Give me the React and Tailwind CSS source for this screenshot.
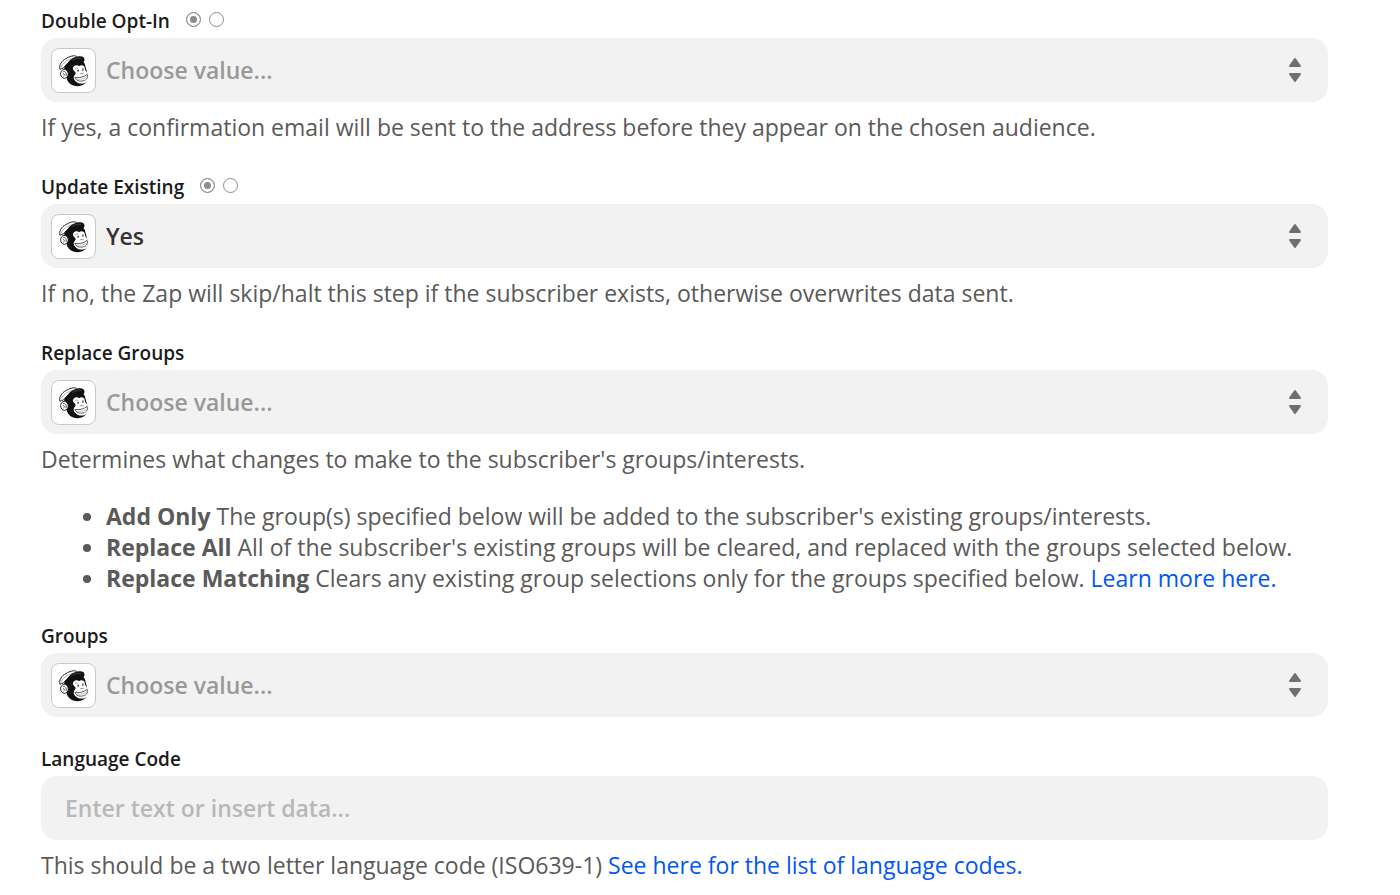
import React, { useState } from "react";

const MailchimpIcon = () => (
  <svg viewBox="64 141 135 135" className="h-full w-full" aria-hidden="true">
    {/* head */}
    <path
      d="M103 192 C112 180 132 174 150 177 C163 178 168 186 169 196 L176 222 C180 238 170 256 145 258 C124 258 113 246 110 232 L102 212 Z"
      fill="#111"
    />
    {/* face */}
    <path
      d="M132 197 C137 191 145 191 149 195 C155 189 167 192 167 201 C167 208 171 211 175 216 C177 220 175 222 177 225 C181 231 178 242 169 247 C157 253 141 248 135 239 C130 232 132 226 136 222 C140 217 138 214 134 210 C129 206 128 201 132 197 Z"
      fill="#fff"
    />
    {/* hat */}
    <path
      d="M89 205 C85 192 94 178 108 171 C118 165 131 160 138 163 C142 164 144 167 143 171 C128 174 111 184 101 200 C97 201 92 203 89 205 Z"
      fill="#fff"
      stroke="#222"
      strokeWidth="3"
      strokeLinejoin="round"
    />
    <path d="M92 199 C96 185 113 173 139 168" fill="none" stroke="#666" strokeWidth="1.5" />
    <path
      d="M112 190 C115 177 132 166 150 164 C160 163 167 168 166 176 C165 181 162 184 157 184 C145 180 130 183 112 190 Z"
      fill="#111"
    />
    <path d="M128 177 C136 171 146 169 155 171" fill="none" stroke="#777" strokeWidth="1.5" />
    {/* ear */}
    <ellipse cx="103" cy="219" rx="12" ry="14" fill="#fff" stroke="#222" strokeWidth="3" />
    <path d="M98 213 C105 208 111 217 108 226 M99 218 C104 218 104 224 100 226" fill="none" stroke="#333" strokeWidth="2.5" />
    {/* eyes, nose and grin */}
    <path d="M136 204 C140 200 144 200 147 203 M158 202 L164 203" fill="none" stroke="#777" strokeWidth="2" />
    <ellipse cx="146" cy="209" rx="2.5" ry="3" fill="#222" />
    <ellipse cx="161" cy="207" rx="2" ry="3" fill="#222" />
    <path d="M153 219 C157 216 159 221 163 217" fill="none" stroke="#333" strokeWidth="2" />
    <path
      d="M136 230 C149 233 163 229 174 221 C178 229 174 238 162 241 C150 244 139 240 136 230 Z"
      fill="#fff"
      stroke="#333"
      strokeWidth="2.5"
    />
    <path d="M141 235 C152 238 166 235 174 228" fill="none" stroke="#888" strokeWidth="1.5" />
  </svg>
);

const SortArrows = () => (
  <svg viewBox="0 0 14 26" className="h-[26px] w-[14px]" fill="#6f6f6f" stroke="#6f6f6f" strokeWidth="2" strokeLinejoin="round" aria-hidden="true">
    <path d="M7 2 L12 9 H2 Z" />
    <path d="M7 24 L12 17 H2 Z" />
  </svg>
);

const ModeRadios = ({ name }) => (
  <div className="flex gap-2 pt-1">
    {["list", "custom"].map((mode) => (
      <input
        key={mode}
        type="radio"
        name={name}
        aria-label={`${name} ${mode}`}
        defaultChecked={mode === "list"}
        className="h-[15px] w-[15px] appearance-none rounded-full border border-[#8c8c8c] bg-white checked:bg-[#8c8c8c] checked:shadow-[inset_0_0_0_3px_white]"
      />
    ))}
  </div>
);

const Label = ({ id, radios, children }) => (
  <div className="mb-1 flex items-start gap-4">
    <label htmlFor={id} className="text-[19px] leading-[26px] font-semibold text-[#1b1b1b]">
      {children}
    </label>
    {radios && <ModeRadios name={id} />}
  </div>
);

const SelectField = ({ id, label, radios, initial = "", children }) => {
  const [value, setValue] = useState(initial);

  return (
    <section>
      <Label id={id} radios={radios}>{label}</Label>
      <div className="relative">
        <select
          id={id}
          value={value}
          onChange={(e) => setValue(e.target.value)}
          className={`block h-16 w-full appearance-none rounded-2xl bg-[#f2f2f2] pr-16 pl-[65px] text-[23px] font-semibold ${
            value ? "text-[#333]" : "text-[#999]"
          }`}
        >
          <option value="">Choose value...</option>
          <option value="yes">Yes</option>
          <option value="no">No</option>
        </select>
        <span className="pointer-events-none absolute inset-y-0 left-[10px] flex items-center">
          <span className="h-[45px] w-[45px] overflow-hidden rounded-lg border border-[#c8c8c8] bg-white">
            <MailchimpIcon />
          </span>
        </span>
        <span className="pointer-events-none absolute inset-y-0 right-[26px] flex items-center">
          <SortArrows />
        </span>
      </div>
      {children}
    </section>
  );
};

const Help = ({ children }) => <p className="mt-[10px]">{children}</p>;

const App = () => {
  return (
    <main className="bg-white pt-2 pr-[72px] pb-4 pl-[41px] font-['Open_Sans',sans-serif] text-[23px] leading-[31px] text-[#5a5a5a]">
      <form className="flex flex-col gap-[29px]">
        <div className="flex flex-col gap-[31px]">
          <SelectField id="double-opt-in" label="Double Opt-In" radios>
            <Help>If yes, a confirmation email will be sent to the address before they appear on the chosen audience.</Help>
          </SelectField>

          <SelectField id="update-existing" label="Update Existing" radios initial="yes">
            <Help>If no, the Zap will skip/halt this step if the subscriber exists, otherwise overwrites data sent.</Help>
          </SelectField>

          <SelectField id="replace-groups" label="Replace Groups">
            <Help>Determines what changes to make to the subscriber's groups/interests.</Help>
            <ul className="mt-[26px] list-disc pl-[65px]">
              <li>
                <strong>Add Only</strong> The group(s) specified below will be added to the subscriber's existing groups/interests.
              </li>
              <li>
                <strong>Replace All</strong> All of the subscriber's existing groups will be cleared, and replaced with the groups selected below.
              </li>
              <li>
                <strong>Replace Matching</strong> Clears any existing group selections only for the groups specified below.{" "}
                <a href="#groups" className="text-[#0057f5]">Learn more here.</a>
              </li>
            </ul>
          </SelectField>
        </div>

        <SelectField id="groups" label="Groups" />

        <section>
          <Label id="language-code">Language Code</Label>
          <input
            id="language-code"
            type="text"
            placeholder="Enter text or insert data..."
            className="block h-16 w-full rounded-2xl bg-[#f2f2f2] px-6 text-[23px] font-semibold text-[#333] placeholder:text-[#b8b8b8]"
          />
          <Help>
            This should be a two letter language code (ISO639-1){" "}
            <a href="#language-code" className="text-[#0057f5]">See here for the list of language codes.</a>
          </Help>
        </section>
      </form>
    </main>
  );
};

export default App;
